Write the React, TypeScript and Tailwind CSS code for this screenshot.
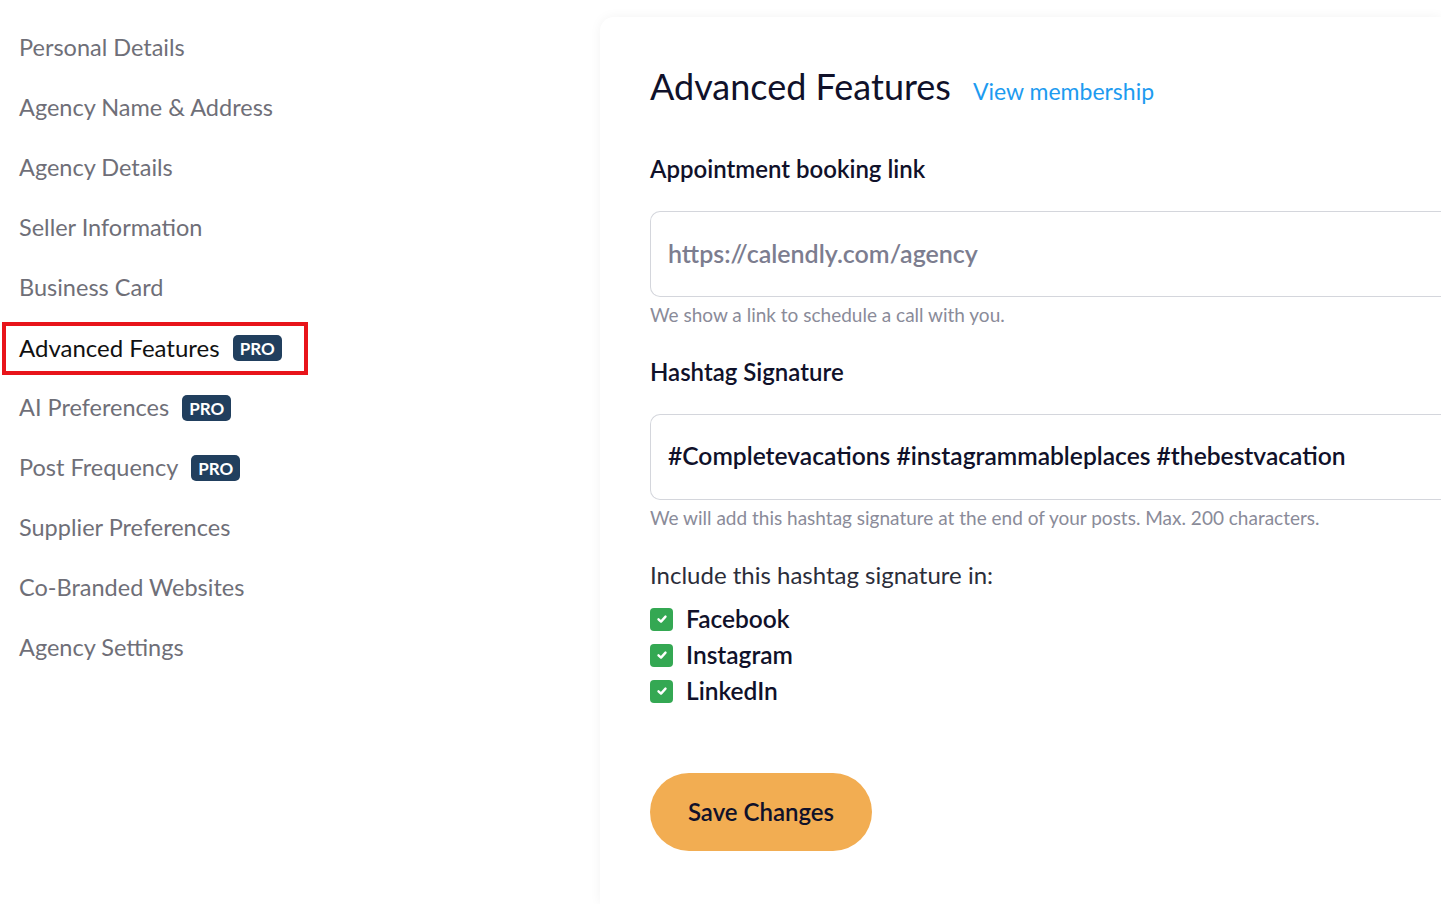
import React from "react";

const navItems: { label: string; pro?: boolean; active?: boolean }[] = [
  { label: "Personal Details" },
  { label: "Agency Name & Address" },
  { label: "Agency Details" },
  { label: "Seller Information" },
  { label: "Business Card" },
  { label: "Advanced Features", pro: true, active: true },
  { label: "AI Preferences", pro: true },
  { label: "Post Frequency", pro: true },
  { label: "Supplier Preferences" },
  { label: "Co-Branded Websites" },
  { label: "Agency Settings" },
];

function Pro() {
  return (
    <span className="ml-[13px] inline-flex h-[26px] items-center rounded-[5px] bg-[#213f5e] px-[7px] text-[17px] font-bold leading-none text-white">
      PRO
    </span>
  );
}

function Check() {
  return (
    <span className="flex h-[23px] w-[23px] items-center justify-center rounded-[4px] bg-[#34a853]">
      <svg width="12" height="12" viewBox="0 0 12 12" fill="none">
        <path d="M2.5 6.3 L5 8.6 L9.5 3.6" stroke="white" strokeWidth="2.4" strokeLinecap="round" strokeLinejoin="round" />
      </svg>
    </span>
  );
}

export default function App() {
  return (
    <div
      className="flex h-[904px] w-[1441px] overflow-hidden bg-white"
      style={{ fontFamily: "Lato, 'Noto Sans', sans-serif" }}
    >
      <aside className="w-[600px] shrink-0 pt-[18px]">
        <nav className="flex flex-col">
          {navItems.map((it) => (
            <div key={it.label} className="flex h-[60px] items-center">
              {it.active ? (
                <div className="ml-[2px] flex h-[53px] w-[306px] items-center border-4 border-[#e8141a] pl-[13px]">
                  <span className="text-[24px] text-[#111111]">{it.label}</span>
                  <Pro />
                </div>
              ) : (
                <div className="flex items-center pl-[19px]">
                  <span className="text-[23.5px] text-[#6f6f78]">{it.label}</span>
                  {it.pro && <Pro />}
                </div>
              )}
            </div>
          ))}
        </nav>
      </aside>
      <main className="mt-[17px] flex-1 rounded-tl-[14px] bg-white pl-[50px] pt-[42px] shadow-[0_0_12px_rgba(0,0,0,0.05)]">
        <div className="flex items-baseline">
          <h1 className="text-[36px] font-normal text-[#10112a]">Advanced Features</h1>
          <a className="ml-[22px] text-[23px] text-[#1d9bf0]">View membership</a>
        </div>
        <h2 className="mt-[38px] text-[24px] font-semibold text-[#10112a]">Appointment booking link</h2>
        <div className="mt-[24px] flex h-[86px] items-center rounded-l-[10px] border border-r-0 border-[#d4d6dc] pl-[17px]">
          <span className="text-[25px] font-semibold text-[#7c7d8f]">https://calendly.com/agency</span>
        </div>
        <p className="mt-[4px] text-[19px] text-[#8a8b99]">We show a link to schedule a call with you.</p>
        <h2 className="mt-[24px] text-[24px] font-semibold text-[#10112a]">Hashtag Signature</h2>
        <div className="mt-[24px] flex h-[86px] items-center rounded-l-[10px] border border-r-0 border-[#d4d6dc] pl-[17px]">
          <span className="text-[24.6px] font-semibold text-[#10112a]">
            #Completevacations #instagrammableplaces #thebestvacation
          </span>
        </div>
        <p className="mt-[4px] text-[19px] text-[#8a8b99]">
          We will add this hashtag signature at the end of your posts. Max. 200 characters.
        </p>
        <p className="mt-[25px] text-[24px] text-[#2b2d3a]">Include this hashtag signature in:</p>
        <div className="mt-[8px] flex flex-col">
          {["Facebook", "Instagram", "LinkedIn"].map((l) => (
            <label key={l} className="flex h-[36px] items-center">
              <Check />
              <span className="ml-[13px] text-[24.5px] font-semibold text-[#10112a]">{l}</span>
            </label>
          ))}
        </div>
        <button className="mt-[64px] h-[78px] w-[222px] rounded-full bg-[#f2ad52] text-[24px] font-semibold text-[#10112a]">
          Save Changes
        </button>
      </main>
    </div>
  );
}
